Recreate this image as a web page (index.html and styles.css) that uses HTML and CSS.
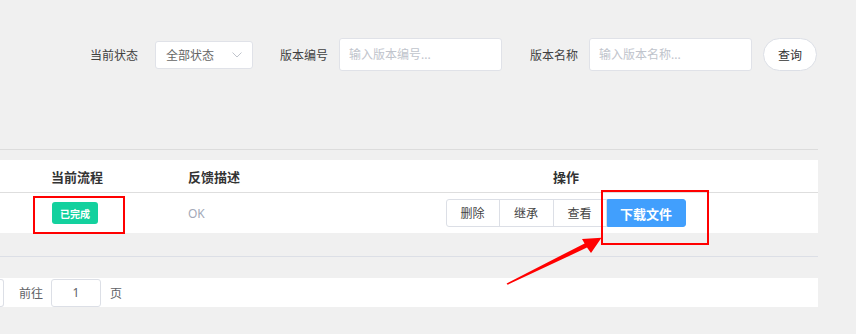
FILE: index.html
```html
<!DOCTYPE html>
<html lang="zh-CN">
<head>
    <meta charset="UTF-8">
    <meta name="viewport" content="width=device-width, initial-scale=1.0">
    <title>版本管理</title>
    <link rel="stylesheet" href="styles.css">
</head>
<body>

    <div class="page">
        <div class="filter-bar">
            <div class="filter-item">
                <span class="filter-label state-label">当前状态</span>
                <div class="select">
                    <span>全部状态</span>
                    <svg class="chevron" width="10" height="6" viewBox="0 0 10 6"><path d="M0.5 0.5 L5 5 L9.5 0.5" fill="none" stroke="#c0c4cc" stroke-width="1"/></svg>
                </div>
            </div>
            <div class="filter-item">
                <span class="filter-label">版本编号</span>
                <input class="text-input" type="text" placeholder="输入版本编号...">
            </div>
            <div class="filter-item">
                <span class="filter-label">版本名称</span>
                <input class="text-input" type="text" placeholder="输入版本名称...">
            </div>
            <button class="search-btn">查询</button>
        </div>

        <div class="divider"></div>

        <div class="table">
            <div class="table-head">
                <div class="cell center">当前流程</div>
                <div class="cell desc">反馈描述</div>
                <div class="cell center">操作</div>
                <div class="cell"></div>
            </div>
            <div class="table-row">
                <div class="cell center"><span class="tag">已完成</span></div>
                <div class="cell desc ok">OK</div>
                <div class="cell center">
                    <div class="btn-group">
                        <button class="btn">删除</button>
                        <button class="btn">继承</button>
                        <button class="btn">查看</button>
                        <button class="btn primary">下载文件</button>
                    </div>
                </div>
                <div class="cell"></div>
            </div>
        </div>

        <div class="divider pager-line"></div>

        <div class="pager">
            <span class="pager-prev"></span>
            <span class="pager-text">前往</span>
            <input class="pager-input" type="text" value="1">
            <span class="pager-text">页</span>
        </div>
    </div>

    <!-- annotation marks drawn over the screenshot -->
    <div class="mark mark-tag"></div>
    <div class="mark mark-download"></div>
    <svg class="arrow" width="856" height="334" viewBox="0 0 856 334">
        <polygon points="506.6,283.4 584.6,243.4 582,239 601.5,237.8 591,253 587,247.6 507.6,284.8" fill="#ff0000"/>
    </svg>

</body>
</html>
```

FILE: styles.css
```css
body {
    font-family: "Noto Sans", "Noto Sans CJK SC", sans-serif;
    background-color: #f0f0f0;
    color: #333;
    margin: 0;
    width: 856px;
    height: 334px;
    overflow: hidden;
    position: relative;
}
.page {
    width: 818px;
}
.filter-bar {
    display: flex;
    justify-content: flex-end;
    align-items: center;
    padding-top: 38px;
    height: 33px;
    padding-right: 1px;
}
.filter-item {
    display: flex;
    align-items: center;
    margin-right: 27px;
}
.filter-item:nth-child(2) {
    margin-right: 28px;
}
.filter-label {
    font-size: 12px;
    color: #404040;
    margin-right: 11px;
}
.state-label {
    margin-right: 17px;
}
.select {
    box-sizing: border-box;
    width: 98px;
    height: 28px;
    background: #fff;
    border: 1px solid #e0e2e8;
    border-radius: 3px;
    display: flex;
    align-items: center;
    justify-content: space-between;
    padding: 0 10px 0 10px;
    font-size: 12px;
    color: #666;
}
.chevron {
    display: block;
}
.text-input {
    box-sizing: border-box;
    width: 163px;
    height: 33px;
    background: #fff;
    border: 1px solid #e0e2e8;
    border-radius: 3px;
    padding: 0 9px;
    font-family: inherit;
    font-size: 12px;
    outline: none;
}
.text-input::placeholder {
    color: #c0c4cc;
}
.search-btn {
    box-sizing: border-box;
    width: 54px;
    height: 33px;
    margin-left: -16px;
    background: #fff;
    border: 1px solid #dcdfe6;
    border-radius: 17px;
    font-family: inherit;
    font-size: 12px;
    color: #333;
    padding: 0;
}
.divider {
    height: 1px;
    background: #dcdcdc;
    margin-top: 78px;
}
.table {
    margin-top: 10px;
    background: #fff;
}
.table-head, .table-row {
    display: grid;
    grid-template-columns: 154px 258px 308px 1fr;
    align-items: center;
}
.table-head {
    height: 32px;
    border-bottom: 1px solid #dedede;
    font-size: 13px;
    font-weight: bold;
    color: #333;
}
.table-row {
    height: 40px;
}
.cell.center {
    display: flex;
    justify-content: center;
}
.cell.desc {
    padding-left: 34px;
}
.ok {
    font-size: 12px;
    color: #a3a9b8;
}
.tag {
    display: inline-flex;
    align-items: center;
    justify-content: center;
    width: 46px;
    height: 22px;
    margin-left: -4px;
    background: #13d19e;
    color: #fff;
    font-size: 10px;
    font-weight: bold;
    border-radius: 3px;
}
.btn-group {
    display: flex;
    margin-left: -1px;
}
.btn {
    box-sizing: border-box;
    height: 28px;
    padding: 0;
    background: #fff;
    border: 1px solid #dcdfe6;
    margin-left: -1px;
    font-family: inherit;
    font-size: 12px;
    color: #444;
    white-space: nowrap;
}
.btn:first-child {
    border-radius: 3px 0 0 3px;
    width: 54px;
    margin-left: 0;
}
.btn:nth-child(2) {
    width: 55px;
}
.btn:nth-child(3) {
    width: 54px;
}
.btn.primary {
    width: 79px;
    background: #419ffd;
    border-color: #419ffd;
    color: #fff;
    font-size: 13px;
    font-weight: bold;
    border-radius: 0 3px 3px 0;
    margin-left: 0;
}
.pager-line {
    background: #dcdfe6;
    margin-top: 23px;
}
.pager {
    margin-top: 21px;
    height: 29px;
    background: #fff;
    display: flex;
    align-items: center;
    font-size: 12px;
    color: #606266;
}
.pager-prev {
    box-sizing: border-box;
    width: 4px;
    height: 28px;
    border: 1px solid #dcdfe6;
    border-left: none;
    border-radius: 0 3px 3px 0;
    margin-right: 15px;
}
.pager-input {
    box-sizing: border-box;
    width: 50px;
    height: 28px;
    margin: 0 9px 0 8px;
    border: 1px solid #dcdfe6;
    border-radius: 3px;
    text-align: center;
    font-family: inherit;
    font-size: 12px;
    color: #606266;
    outline: none;
}
.mark {
    position: absolute;
    box-sizing: border-box;
    border: 2px solid #ff0000;
}
.mark-tag {
    left: 33px;
    top: 196px;
    width: 92px;
    height: 38px;
}
.mark-download {
    left: 601px;
    top: 190px;
    width: 108px;
    height: 55px;
}
.arrow {
    position: absolute;
    left: 0;
    top: 0;
    pointer-events: none;
}
```
